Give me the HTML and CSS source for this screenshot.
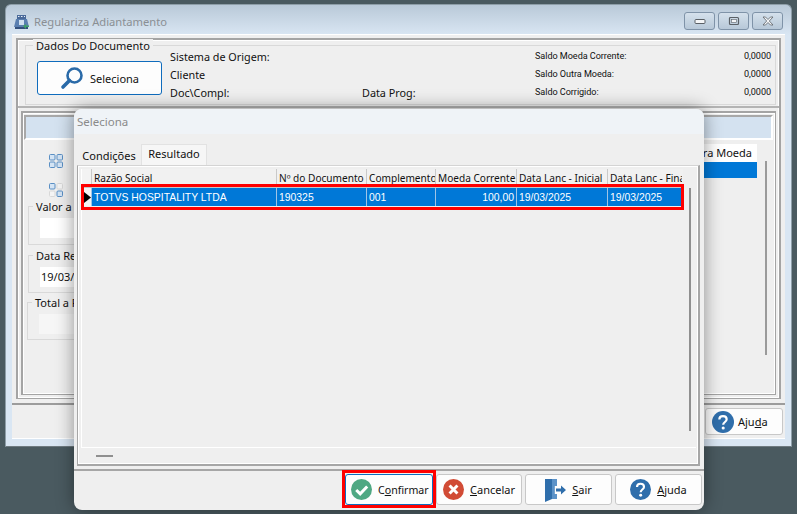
FILE: index.html
```html
<!DOCTYPE html>
<html lang="pt">
<head>
<meta charset="utf-8">
<title>Regulariza Adiantamento</title>
<link rel="stylesheet" href="styles.css">
</head>
<body>
<div class="desktop">
  <section class="win back">
    <header class="back-title">
      <svg class="app-icon" width="16" height="16" viewBox="0 0 16 16"><path d="M3 1h9v4H3z" fill="#4a6a9a"/><path d="M4 2h1.500v1H4zM7 2h1.500v1H7zM10 2h1v1h-1z" fill="#e8eef5"/><path d="M2 5h11l2 8H0z" fill="#5a7fb0"/><path d="M5 6h5v5H5z" fill="#cfe0f0"/><path d="M1 13h13v2H1z" fill="#33507c"/><path d="M9 12l3-2v1.500h3v1.500h-3V15z" fill="#3fa06a"/></svg>
      <span class="back-caption">Regulariza Adiantamento</span>
      <div class="win-buttons">
        <span class="win-btn"><svg width="12" height="8" viewBox="0 0 12 8"><rect x="1" y="2.500" width="10" height="4" rx="1" fill="#f4f6f8" stroke="#5a6066"/></svg></span>
        <span class="win-btn"><svg width="12" height="10" viewBox="0 0 12 10"><rect x="1.500" y="1.500" width="9" height="7" rx="1" fill="none" stroke="#5a6066" stroke-width="1.200"/><rect x="3.500" y="3.500" width="5" height="3" fill="#f4f6f8" stroke="#5a6066" stroke-width=".6"/></svg></span>
        <span class="win-btn"><svg width="14" height="10" viewBox="0 0 14 10"><path d="M2 1h2.500L7 3.500 9.500 1H12L8.300 5 12 9H9.500L7 6.500 4.500 9H2l3.700-4z" fill="#f4f6f8" stroke="#5a6066" stroke-width=".8"/></svg></span>
      </div>
    </header>
    <div class="back-client">
      <div class="back-frame">
        <div class="doc-panel">
          <div class="group doc-group">
            <span class="legend doc-legend">Dados Do Documento</span>
            <button class="sel-btn" type="button">
              <svg width="24" height="24" viewBox="0 0 24 24"><circle cx="14.500" cy="9.500" r="7" fill="none" stroke="#2a6aa8" stroke-width="2.600"/><path d="M9.500 14.500L3 21" stroke="#2a6aa8" stroke-width="3.600" stroke-linecap="round"/></svg>
              <span>Seleciona</span>
            </button>
            <div class="doc-info">
              <span class="lbl">Sistema de Origem:</span><span></span><span class="sld">Saldo Moeda Corrente:</span><span class="val">0,0000</span>
              <span class="lbl">Cliente</span><span></span><span class="sld">Saldo Outra Moeda:</span><span class="val">0,0000</span>
              <span class="lbl">Doc\Compl:</span><span class="lbl">Data Prog:</span><span class="sld">Saldo Corrigido:</span><span class="val">0,0000</span>
            </div>
          </div>
        </div>
        <div class="main-panel">
          <div class="strip"></div>
          <div class="main-body">
            <div class="side">
              <div class="side-icons">
                <svg width="14" height="14" viewBox="0 0 14 14"><g fill="#d4e4f4" stroke="#5a8fc4"><rect x=".5" y=".5" width="5.500" height="5.500" rx="1"/><rect x="8" y=".5" width="5.500" height="5.500" rx="1"/><rect x=".5" y="8" width="5.500" height="5.500" rx="1"/><rect x="8" y="8" width="5.500" height="5.500" rx="1"/></g></svg>
                <svg width="14" height="14" viewBox="0 0 14 14"><g fill="#d4e4f4" stroke="#5a8fc4"><rect x=".5" y=".5" width="5.500" height="5.500" rx="1"/><rect x="8" y="8" width="5.500" height="5.500" rx="1"/></g><g fill="#f4f4f4" stroke="#d8d8d8"><rect x="8" y=".5" width="5.500" height="5.500" rx="1"/><rect x=".5" y="8" width="5.500" height="5.500" rx="1"/></g></svg>
              </div>
              <div class="group side-group g1"><span class="legend">Valor a Regularizar</span><div class="input white"></div></div>
              <div class="group side-group g2"><span class="legend">Data Regularização</span><div class="input white">19/03/2025</div></div>
              <div class="group side-group g3"><span class="legend total">Total a Regularizar</span><div class="input pale"></div></div>
            </div>
            <div class="peek">
              <div class="peek-head">Outra Moeda</div>
              <div class="peek-row"></div>
            </div>
            <div class="peek-scroll"></div>
          </div>
        </div>
      </div>
      <footer class="back-foot">
        <button class="btn back-help" type="button">
          <svg class="q" width="22" height="22" viewBox="0 0 24 24"><circle cx="12" cy="12" r="12" fill="#2f6eab"/><path d="M8 9.200C8 6.800 9.800 5.500 12 5.500s4 1.300 4 3.500c0 3-3.800 3-3.800 6" fill="none" stroke="#fff" stroke-width="2.400"/><circle cx="12.200" cy="18.500" r="1.700" fill="#fff"/></svg>
          <span>Aju<u>d</u>a</span>
        </button>
      </footer>
    </div>
  </section>

  <section class="win modal">
    <header class="modal-title">Seleciona</header>
    <div class="modal-body">
      <div class="tabs">
        <span class="tab">Condições</span>
        <span class="tab active">Resultado</span>
      </div>
      <div class="tab-page">
        <div class="grid-wrap">
          <div class="grid">
            <div class="grid-row head">
              <span class="ind"></span><span>Razão Social</span><span>Nº do Documento</span><span>Complemento</span><span>Moeda Corrente</span><span>Data Lanc - Inicial</span><span>Data Lanc - Final</span>
            </div>
            <div class="grid-row sel">
              <span class="ind"><svg width="7" height="11" viewBox="0 0 7 11"><path d="M0 0l7 5.500L0 11z" fill="#000"/></svg></span><span>TOTVS HOSPITALITY LTDA</span><span>190325</span><span>001</span><span class="num">100,00</span><span>19/03/2025</span><span>19/03/2025</span>
            </div>
            <div class="row-mark"></div>
          </div>
          <div class="grid-scroll"></div>
        </div>
        <div class="hscroll"><span class="hthumb"></span></div>
      </div>
    </div>
    <footer class="modal-foot">
      <div class="confirm-mark">
        <button class="btn act confirm" type="button">
          <svg width="21" height="21" viewBox="0 0 24 24"><circle cx="12" cy="12" r="12" fill="#4fa883"/><path d="M6 12.500l4.500 4.500L18.500 8.500" fill="none" stroke="#fff" stroke-width="3.400"/></svg>
          <span>C<u>o</u>nfirmar</span>
        </button>
      </div>
      <button class="btn act cancel" type="button">
        <svg width="21" height="21" viewBox="0 0 24 24"><circle cx="12" cy="12" r="12" fill="#d14b35"/><path d="M7.500 7.500l9 9M16.500 7.500l-9 9" stroke="#fff" stroke-width="3.400"/></svg>
        <span><u>C</u>ancelar</span>
      </button>
      <button class="btn act" type="button">
        <svg width="21" height="24" viewBox="0 0 21 24"><path d="M0 1h12v7H9.500v8H12v5H7l-7 3z" fill="#2f6eab"/><path d="M7 1h5v7H9.500v8H12v5H7z" fill="#5b92c8"/><path d="M11 10.500h5V7.500l5 4.500-5 4.500v-3h-5z" fill="#2f6eab"/></svg>
        <span><u>S</u>air</span>
      </button>
      <button class="btn act" type="button">
        <svg width="21" height="21" viewBox="0 0 24 24"><circle cx="12" cy="12" r="12" fill="#2f6eab"/><path d="M8 9.200C8 6.800 9.800 5.500 12 5.500s4 1.300 4 3.500c0 3-3.800 3-3.800 6" fill="none" stroke="#fff" stroke-width="2.400"/><circle cx="12.200" cy="18.500" r="1.700" fill="#fff"/></svg>
        <span><u>A</u>juda</span>
      </button>
    </footer>
  </section>
</div>
</body>
</html>
```
FILE: styles.css
```css
* { box-sizing: border-box; }
html, body { margin: 0; padding: 0; }
body {
  width: 797px; height: 514px; overflow: hidden;
  background: #4a5a60;
  font-family: "Noto Sans", "Liberation Sans", sans-serif;
  font-size: 11px; color: #111;
}
.desktop { position: relative; width: 797px; height: 514px; overflow: hidden; }
.win { position: absolute; display: flex; flex-direction: column; }
button { font: inherit; color: inherit; margin: 0; }

/* back window */
.back {
  left: 5px; top: 4px; width: 787px; height: 443px;
  border-radius: 6px 6px 0 0;
  background: linear-gradient(#b9c9d8 0, #d9e6f3 30px, #d9e6f3 100%);
  border: 1px solid #8e9ea8; border-bottom-color: #6e7a80;
}
.back-title { height: 29px; flex: none; display: flex; align-items: center; padding: 4px 8px 0 8px; }
.app-icon { flex: none; }
.back-caption { margin-left: 4px; font-size: 11.200px; color: #8a8f94; }
.win-buttons { margin-left: auto; display: flex; gap: 3px; margin-top: -2px; }
.win-btn {
  width: 31px; height: 18px; border: 1px solid #7f93a8; border-radius: 3px;
  background: linear-gradient(#d5e1ec, #b7c8d8);
  display: flex; align-items: center; justify-content: center;
}
.back-client {
  flex: 1; margin: 0 6px 7px; background: #efefef;
  border-top: 1px solid #fff; border-bottom: 1px solid #fff;
  display: flex; flex-direction: column;
}
.back-frame {
  margin: 3px 4px 0; height: 361px; flex: none;
  border: 2px solid #a4a4a4; border-bottom-width: 1px;
  box-shadow: inset 0 0 0 1px #fff;
  display: flex; flex-direction: column;
}
.doc-panel { height: 68px; flex: none; border-bottom: 2px solid #b4b4b4; padding: 5px 3px 0 7px; }
.group { position: relative; border: 1px solid #d9d9d9; }
.legend { position: absolute; background: #efefef; padding: 0 3px; white-space: nowrap; line-height: 14px; }
.doc-group { height: 60px; display: flex; align-items: flex-start; padding: 0; }
.doc-legend { left: 7px; top: -7px; font-size: 11px; }
.sel-btn {
  flex: none; width: 125px; height: 34px; margin: 15px 0 0 11px;
  display: flex; align-items: center; justify-content: center; gap: 6px;
  background: #fdfdfd; border: 1px solid #0f6cbd; border-radius: 3px; font-size: 11px;
}
.doc-info {
  display: grid; grid-template-columns: 192px 173px 1fr auto; grid-template-rows: repeat(3, 18px);
  align-items: center; margin: 1px 4px 0 8px; flex: 1;
}
.lbl { font-size: 10.800px; white-space: nowrap; }
.sld, .val { font-family: Roboto, "Liberation Sans", sans-serif; font-size: 9.100px; letter-spacing: -.05px; white-space: nowrap; }
.main-panel { flex: 1; min-height: 0; margin: 3px 3px 3px 3px; border: 1px solid #a4a4a4; border-width: 2px 1px 1px 2px; box-shadow: inset 0 0 0 1px #fff; display: flex; flex-direction: column; }
.strip { height: 25px; flex: none; margin: 2px 2px 0 1px; background: #d4e2f0; border: 2px solid #a8a8a8; border-bottom-color: #fff; border-right-color: #fff; }
.main-body { flex: 1; display: flex; min-height: 0; }
.side { width: 200px; flex: none; padding-left: 5px; display: flex; flex-direction: column; }
.side-icons { display: flex; flex-direction: column; gap: 15px; margin: 14px 0 0 21px; }
.side-group { width: 180px; flex: none; }
.side-group .legend { left: 4px; top: -7px; }
.side-group .legend.total { left: 4px; }
.g1 { height: 39px; margin-top: 9px; }
.g2 { height: 38px; margin-top: 10px; }
.g3 { height: 38px; margin-top: 9px; margin-left: -1px; }
.input { height: 20px; margin: 11px 0 0 11px; width: 150px; padding-left: 1px; line-height: 20px; }
.input.white { background: #fff; }
.input.pale { background: #f6f6f6; }
.peek { margin-left: 454px; width: 80px; flex: none; }
.peek-head { height: 18px; margin-top: 4px; background: #fff; text-align: right; padding-right: 5px; line-height: 18px; white-space: nowrap; overflow: hidden; }
.peek-row { height: 16px; background: #0078d7; }
.peek-scroll { width: 2px; height: 194px; margin: 21px 0 0 8px; background: #9a9a9a; flex: none; }
.back-foot { flex: 1; border-top: 2px solid #9c9c9c; margin-top: 4px; display: flex; justify-content: flex-end; padding: 3px 2px 0 0; }
.btn {
  display: flex; align-items: center; background: #fdfdfd;
  border: 1px solid #c8c8c8; border-radius: 3px; font-size: 11px; padding: 0;
}
.back-help { width: 78px; height: 27px; padding-left: 6px; gap: 4px; }
.q { flex: none; }

/* modal */
.modal {
  left: 74px; top: 109px; width: 630px; height: 401px;
  border-radius: 8px; background: #efefef;
  box-shadow: 0 0 18px rgba(0,0,0,.42);
  overflow: hidden;
}
.modal-title { height: 25px; flex: none; background: #eff3f7; color: #8a8a8a; font-size: 11.500px; line-height: 25px; padding-left: 3px; }
.modal-body { flex: 1; min-height: 0; display: flex; flex-direction: column; padding: 10px 4px 0 3px; border-bottom: 2px solid #a6a6a6; }
.tabs { display: flex; height: 21px; flex: none; align-items: flex-end; }
.tab { height: 18px; width: 64px; text-align: center; line-height: 18px; }
.tab.active { height: 21px; width: 66px; background: #f6f6f6; border: 1px solid #e2e2e2; border-bottom: 0; line-height: 18px; }
.tab-page { flex: 1; margin-bottom: 3px; border: 2px solid #a6a6a6; border-top: 1px solid #d4d4d4; border-left-width: 1px; box-shadow: inset 0 0 0 1px #fff; padding: 3px 2px 0 3px; display: flex; flex-direction: column; }
.grid-wrap { height: 279px; flex: none; display: flex; border-bottom: 1px solid #fff; }
.grid { position: relative; width: 602px; flex: none; border-left: 1px solid #fff; }
.grid-row { display: grid; grid-template-columns: 9px 185px 90px 69px 81px 91px 75px; height: 18px; }
.grid-row > span { border-left: 1px solid #c9c9c9; padding: 0 0 0 2px; line-height: 18px; white-space: nowrap; overflow: hidden; }
.grid-row.head { height: 19px; font-size: 10.100px; background: #f1f1f1; border-bottom: 1px solid #c6c6c6; }
.grid-row .ind { background: #f3f3f3; padding: 0 0 0 2px; display: flex; align-items: center; border-left: 0; }
.grid-row.sel { background: #0078d7; color: #fff; font-family: "Liberation Sans", sans-serif; font-size: 10.400px; }
.grid-row.sel > span { border-left-color: #9fc4e6; line-height: 20px; }
.grid-row .num { text-align: right; padding-right: 2px; }
.row-mark { position: absolute; left: -1px; top: 15px; width: 603px; height: 26px; border: 3px solid #f00; }
.grid-scroll { width: 2px; height: 243px; margin: 19px 0 0 6px; background: #8f8f8f; }
.hscroll { flex: 1; display: flex; align-items: center; padding-left: 15px; }
.hthumb { width: 17px; height: 2px; background: #8f8f8f; }
.modal-foot { height: 39px; flex: none; display: flex; justify-content: flex-end; align-items: flex-start; gap: 3px; padding: 3px 2px 0 0; }
.act { width: 87px; height: 31px; justify-content: center; gap: 6px; }
.cancel { width: 86px; }
.confirm-mark { flex: none; border: 3px solid #f00; padding-top: 1px; margin: -4px -3px 0 -3px; }
.confirm { width: 88px; border-color: #0f6cbd; justify-content: flex-start; padding-left: 5px; font-size: 10.600px; }
```
